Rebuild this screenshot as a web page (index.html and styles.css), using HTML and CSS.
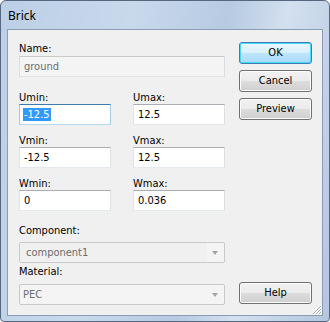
FILE: index.html
```
<!DOCTYPE html>
<html lang="en">
<head>
    <meta charset="UTF-8">
    <meta name="viewport" content="width=device-width, initial-scale=1.0">
    <title>Brick</title>
    <link rel="stylesheet" href="styles.css">
</head>
<body>
    <div class="window">
        <div class="titlebar"><span class="title">Brick</span></div>
        <div class="client">
            <div class="form">
                <div class="field field-name">
                    <div class="label">Name:</div>
                    <div class="textbox disabled wide">ground</div>
                </div>

                <div class="row row-u">
                    <div class="field">
                        <div class="label">Umin:</div>
                        <div class="textbox focused"><span class="selected">-12.5</span></div>
                    </div>
                    <div class="field">
                        <div class="label">Umax:</div>
                        <div class="textbox">12.5</div>
                    </div>
                </div>

                <div class="row row-v">
                    <div class="field">
                        <div class="label">Vmin:</div>
                        <div class="textbox">-12.5</div>
                    </div>
                    <div class="field">
                        <div class="label">Vmax:</div>
                        <div class="textbox">12.5</div>
                    </div>
                </div>

                <div class="row row-w">
                    <div class="field">
                        <div class="label">Wmin:</div>
                        <div class="textbox">0</div>
                    </div>
                    <div class="field">
                        <div class="label">Wmax:</div>
                        <div class="textbox">0.036</div>
                    </div>
                </div>

                <div class="field field-component">
                    <div class="label">Component:</div>
                    <div class="combo">
                        <span class="combo-text inner">component1</span>
                        <span class="arrow"></span>
                    </div>
                </div>

                <div class="field field-material">
                    <div class="label">Material:</div>
                    <div class="combo">
                        <span class="combo-text">PEC</span>
                        <span class="arrow"></span>
                    </div>
                </div>
            </div>

            <div class="buttons">
                <div class="btn btn-default">OK</div>
                <div class="btn">Cancel</div>
                <div class="btn">Preview</div>
                <div class="btn btn-help">Help</div>
            </div>

            <svg class="grip" width="10" height="10" viewBox="0 0 10 10">
                <path d="M9 2 L2 9 M9 5 L5 9 M9 8 L8 9" stroke="#ffffff" stroke-width="1"/>
                <path d="M9 1 L1 9 M9 4 L4 9 M9 7 L7 9" stroke="#a9b3bd" stroke-width="1"/>
            </svg>
        </div>
    </div>
</body>
</html>
```

FILE: styles.css
```
body {
    margin: 0;
    padding: 0;
    font-family: "DejaVu Sans Condensed", "DejaVu Sans", sans-serif;
    font-size: 11px;
    color: #000;
    background: #fff;
}

.window {
    width: 330px;
    height: 322px;
    box-sizing: border-box;
    border: 1px solid #56687f;
    border-radius: 6px 6px 4px 4px;
    background: linear-gradient(100deg, #bccfe6 0%, #c9d9ec 35%, #b6cae2 60%, #d3e0ef 75%, #b3c6de 100%);
    display: flex;
    flex-direction: column;
}

.titlebar {
    height: 28px;
    padding-left: 7px;
    display: flex;
    align-items: center;
}

.title {
    font-family: "Noto Sans", "Open Sans", sans-serif;
    font-size: 12px;
    color: #000;
    margin-top: 1px;
}

.client {
    position: relative;
    flex: 1;
    margin: 0 6px 5px 6px;
    border: 1px solid #8a9db5;
    background: #f0f0f0;
    display: flex;
    padding: 13px 0 0 11px;
}

.form {
    width: 206px;
    display: flex;
    flex-direction: column;
}

.label {
    height: 12px;
    line-height: 12px;
    white-space: nowrap;
}

.row {
    display: grid;
    grid-template-columns: 92px 92px;
    column-gap: 22px;
}

.field-name .textbox {
    margin-top: 1px;
}

.row-u {
    margin-top: 15px;
}

.row-v,
.row-w {
    margin-top: 10px;
}

.field-component {
    margin-top: 14px;
}

.field-component .combo {
    margin-top: 5px;
}

.field-material {
    margin-top: 3px;
}

.field-material .combo {
    margin-top: 6px;
}

.textbox {
    height: 21px;
    box-sizing: border-box;
    border: 1px solid;
    border-color: #abadb3 #dbdfe6 #e3e9ef #e2e3ea;
    background: #fff;
    padding-left: 4px;
    line-height: 19px;
    white-space: nowrap;
    overflow: hidden;
}

.textbox.disabled {
    background: #f4f4f4;
    border-color: #c9cacc #dcdde0 #e2e3e6 #dcdde0;
    color: #6d6d6d;
}

.textbox.focused {
    border-color: #3d7bad #a4c9e3 #b7d9ed #a4c9e3;
    padding-left: 3px;
}

.selected {
    background: #3399ff;
    color: #fff;
    padding: 0 1px;
}

.combo {
    height: 21px;
    box-sizing: border-box;
    border: 1px solid #c7c9cc;
    border-radius: 2px;
    background: #f4f4f4;
    display: flex;
    align-items: center;
    position: relative;
    color: #6d6d6d;
}

.combo-text {
    flex: 1;
    height: 100%;
    line-height: 19px;
    padding-left: 3px;
}

.combo-text.inner {
    margin-right: 17px;
    padding-left: 6px;
    background: #f0f0f0;
}

.arrow {
    position: absolute;
    right: 6px;
    top: 8px;
    width: 0;
    height: 0;
    border-left: 3px solid transparent;
    border-right: 3px solid transparent;
    border-top: 4px solid #a4a4a4;
}

.buttons {
    margin-left: 14px;
    margin-top: -1px;
    margin-bottom: 11px;
    width: 73px;
    display: flex;
    flex-direction: column;
    gap: 6px;
}

.btn {
    height: 22px;
    box-sizing: border-box;
    border: 1px solid #707070;
    border-radius: 3px;
    background: linear-gradient(#f2f2f2 0%, #ebebeb 50%, #dddddd 50%, #cfcfcf 100%);
    box-shadow: inset 0 0 0 1px #fcfcfc;
    text-align: center;
    line-height: 20px;
}

.btn-default {
    border-color: #3c7fb1;
    background: linear-gradient(#eaf6fd 0%, #d9f0fc 50%, #bee6fd 50%, #a7d9f5 100%);
    box-shadow: inset 0 0 0 1px #48d8fb;
}

.btn-help {
    margin-top: auto;
}

.grip {
    position: absolute;
    right: 0;
    bottom: 0;
}
```
